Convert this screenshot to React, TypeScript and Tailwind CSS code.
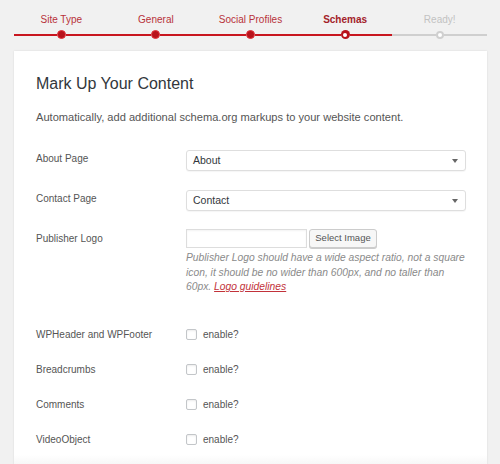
import React from "react";

const steps = [
  { label: "Site Type", state: "done" },
  { label: "General", state: "done" },
  { label: "Social Profiles", state: "done" },
  { label: "Schemas", state: "current" },
  { label: "Ready!", state: "todo" },
];

function Dot({ state }: { state: string }) {
  if (state === "done")
    return <div className="w-[9px] h-[9px] rounded-full bg-[#b8121b] border border-[#e2323a] shrink-0" />;
  if (state === "current")
    return (
      <div className="w-[9px] h-[9px] rounded-full bg-[#b8121b] shrink-0 flex items-center justify-center">
        <div className="w-[4px] h-[4px] rounded-full bg-white" />
      </div>
    );
  return (
    <div className="w-[8px] h-[8px] rounded-full border-2 border-[#cfcfcf] bg-white shrink-0" />
  );
}

function Checkbox() {
  return (
    <div className="w-[11px] h-[11px] rounded-[2px] border border-[#c3c6c9] bg-white shadow-[inset_0_1px_2px_rgba(0,0,0,0.08)] shrink-0" />
  );
}

function SelectBox({ value }: { value: string }) {
  return (
    <div className="w-[280px] h-[21px] rounded-[3px] border border-[#dedede] bg-white shadow-[0_1px_1px_rgba(0,0,0,0.04)] flex items-center justify-between pl-[6px] pr-[7px]">
      <span className="text-[10.5px] text-[#32373c]">{value}</span>
      <svg width="6" height="4" viewBox="0 0 6 4">
        <path d="M0 0 L6 0 L3 4 Z" fill="#666" />
      </svg>
    </div>
  );
}

export default function App() {
  const checks = ["WPHeader and WPFooter", "Breadcrumbs", "Comments", "VideoObject"];
  return (
    <div
      className="w-[500px] h-[464px] bg-[#f1f1f1] overflow-hidden"
      style={{ fontFamily: '"Liberation Sans", Arial, sans-serif' }}
    >
      {/* Stepper */}
      <div className="px-[14px] pt-[13px]">
        <div className="grid grid-cols-5 w-[473px]">
          {steps.map((s) => (
            <div
              key={s.label}
              className={
                "text-center text-[10px] leading-[14px] " +
                (s.state === "current"
                  ? "font-bold text-[#a3222a]"
                  : s.state === "todo"
                  ? "text-[#c2c2c2]"
                  : "text-[#b8323a]")
              }
            >
              {s.label}
            </div>
          ))}
        </div>
        <div className="grid grid-cols-5 w-[473px] mt-[3px] h-[9px]">
          {steps.map((s) => (
            <div key={s.label} className="flex items-center">
              <div className={"flex-1 h-[2px] " + (s.state === "todo" ? "bg-[#cfcfcf]" : "bg-[#c8161f]")} />
              <Dot state={s.state} />
              <div className={"flex-1 h-[2px] " + (s.state === "todo" ? "bg-[#cfcfcf]" : "bg-[#c8161f]")} />
            </div>
          ))}
        </div>
      </div>

      {/* Card */}
      <div className="ml-[14px] mt-[12px] w-[473px] h-[420px] bg-white shadow-[0_0_2px_rgba(0,0,0,0.1)] flex flex-col">
        <div className="pl-[22px] pr-[21px] pt-[23px] flex flex-col">
          <h1 className="text-[16px] leading-[20px] text-[#32373c]">Mark Up Your Content</h1>
          <p className="mt-[15px] text-[11.1px] leading-[16px] text-[#555]">
            Automatically, add additional schema.org markups to your website content.
          </p>

          <div className="mt-[25px] flex">
            <div className="w-[150px] text-[10px] leading-[18px] text-[#555]">About Page</div>
            <SelectBox value="About" />
          </div>
          <div className="mt-[19px] flex">
            <div className="w-[150px] text-[10px] leading-[18px] text-[#555]">Contact Page</div>
            <SelectBox value="Contact" />
          </div>

          <div className="mt-[18px] flex">
            <div className="w-[150px] text-[10px] leading-[19px] text-[#555]">Publisher Logo</div>
            <div className="w-[280px] flex flex-col">
              <div className="flex gap-[2px]">
                <div className="w-[121px] h-[19px] border border-[#dddddd] bg-white shadow-[inset_0_1px_2px_rgba(0,0,0,0.05)]" />
                <div className="w-[68px] h-[19px] rounded-[3px] border border-[#cccccc] bg-[#f7f7f7] shadow-[0_1px_0_#ccc] flex items-center justify-center text-[9.5px] text-[#555]">
                  Select Image
                </div>
              </div>
              <p className="mt-[3px] text-[10.3px] leading-[14.5px] italic text-[#8a8a8a]">
                Publisher Logo should have a wide aspect ratio, not a square icon, it should be no wider than 600px, and no taller than 60px.{" "}
                <span className="text-[#c2323a] underline">Logo guidelines</span>
              </p>
            </div>
          </div>

          <div className="mt-[22px] flex flex-col">
            {checks.map((c) => (
              <div key={c} className="h-[35px] flex items-center">
                <div className="w-[150px] text-[10px] text-[#555]">{c}</div>
                <Checkbox />
                <span className="ml-[6px] text-[10px] text-[#555]">enable?</span>
              </div>
            ))}
          </div>
        </div>
        <div className="mt-[-2px] flex-1 bg-gradient-to-b from-white to-[#f1f1f1]" />
      </div>
    </div>
  );
}
